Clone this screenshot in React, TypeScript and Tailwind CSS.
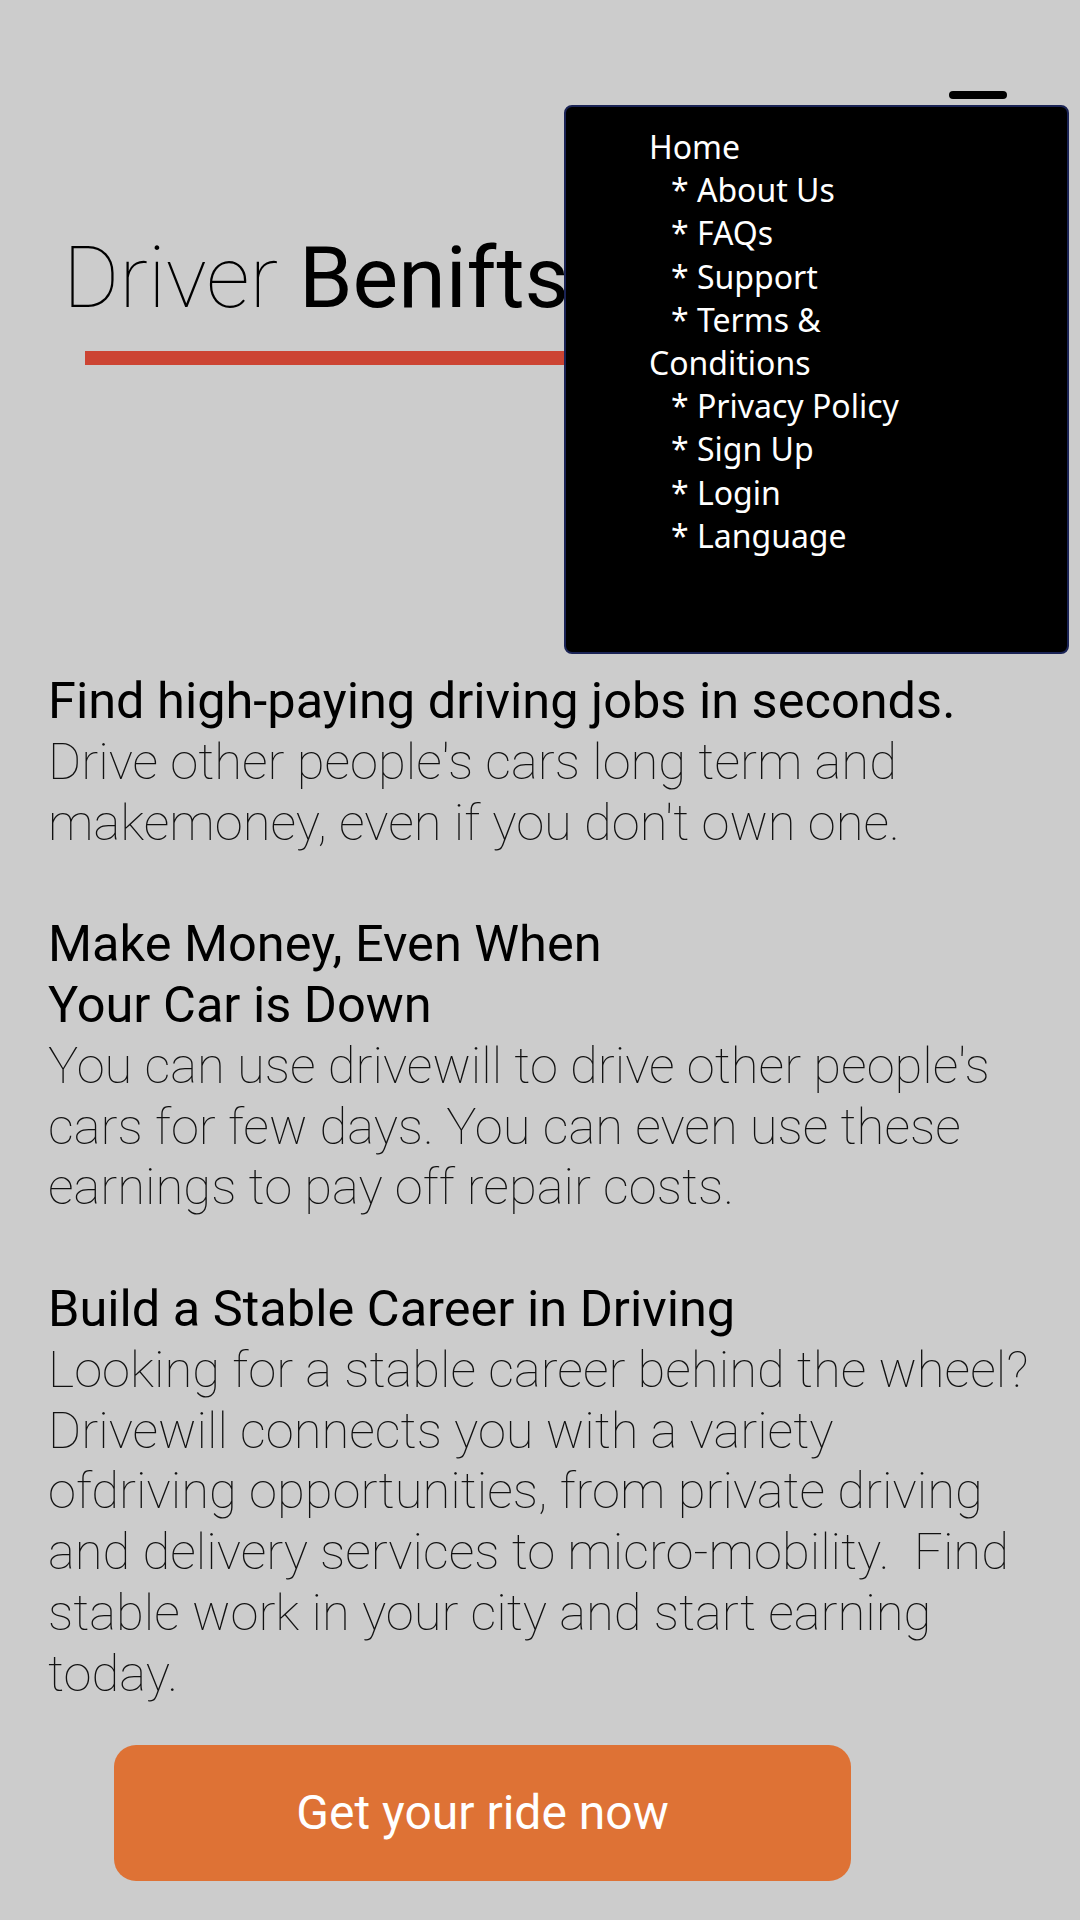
import React from "react";

const menuItems: { label: string; sub: boolean }[] = [
  { label: "Home", sub: false },
  { label: "* About Us", sub: true },
  { label: "* FAQs", sub: true },
  { label: "* Support", sub: true },
  { label: "* Terms &", sub: true },
  { label: "Conditions", sub: false },
  { label: "* Privacy Policy", sub: true },
  { label: "* Sign Up", sub: true },
  { label: "* Login", sub: true },
  { label: "* Language", sub: true },
];

export default function App() {
  return (
    <div
      className="relative min-h-[1920px] w-[1080px] bg-[#cccccc] text-black"
      style={{ fontFamily: "Roboto, 'Liberation Sans', sans-serif" }}
    >
      {/* hamburger (mostly hidden by the open menu) */}
      <div className="absolute left-[949px] top-[91px] h-[8px] w-[58px] rounded-full bg-black" />

      {/* open menu */}
      <div
        className="absolute left-[564px] top-[105px] h-[549px] w-[505px] rounded-[8px] border-2 border-[#1a2355] bg-black pl-[83px] pt-[18px] text-[32px] leading-[43.2px] text-white"
        style={{ fontFamily: "'Noto Sans', 'Open Sans', sans-serif" }}
      >
        {menuItems.map((m) => (
          <div key={m.label} className={m.sub ? "pl-[22px]" : ""}>
            {m.label}
          </div>
        ))}
      </div>

      {/* title */}
      <div className="pl-[63px] pt-[228px]">
        <h1 className="text-[86px] leading-[100px] whitespace-nowrap">
          <span className="font-thin">Driver </span>
          <span className="font-normal">Benifts</span>
        </h1>
        <div className="ml-[22px] mt-[23px] h-[14px] w-[600px] bg-[#cc4433]" />
      </div>

      {/* benefits */}
      <div className="pl-[48px] pr-[20px] pt-[306px] text-[50.75px] leading-[60.8px]">
        <section>
          <h2 className="text-[50.5px] font-normal">Find high-paying driving jobs in seconds.</h2>
          <p className="font-thin text-[#111]">
            Drive other people's cars long term and makemoney, even if you don't own one.
          </p>
        </section>
        <section className="mt-[60.8px]">
          <h2 className="w-[600px] text-[50.5px] font-normal">Make Money, Even When Your Car is Down</h2>
          <p className="w-[990px] font-thin text-[#111]">
            You can use drivewill to drive other people's cars for few days. You can even use these
            earnings to pay off repair costs.
          </p>
        </section>
        <section className="mt-[60.8px]">
          <h2 className="text-[50.5px] font-normal">Build a Stable Career in Driving</h2>
          <p className="whitespace-pre-wrap font-thin text-[#111]">
            {"Looking for a stable career behind the wheel? Drivewill connects you with a variety"}
            <br />
            {"ofdriving opportunities, from private driving and delivery services to micro-mobility.  Find stable work in your city and start earning today."}
          </p>
        </section>
      </div>

      {/* call to action */}
      <div className="pl-[114px] pt-[40px]">
        <button className="flex h-[136px] w-[737px] items-center justify-center rounded-[22px] bg-[#de7235] text-[48px] text-white">
          Get your ride now
        </button>
      </div>
    </div>
  );
}
